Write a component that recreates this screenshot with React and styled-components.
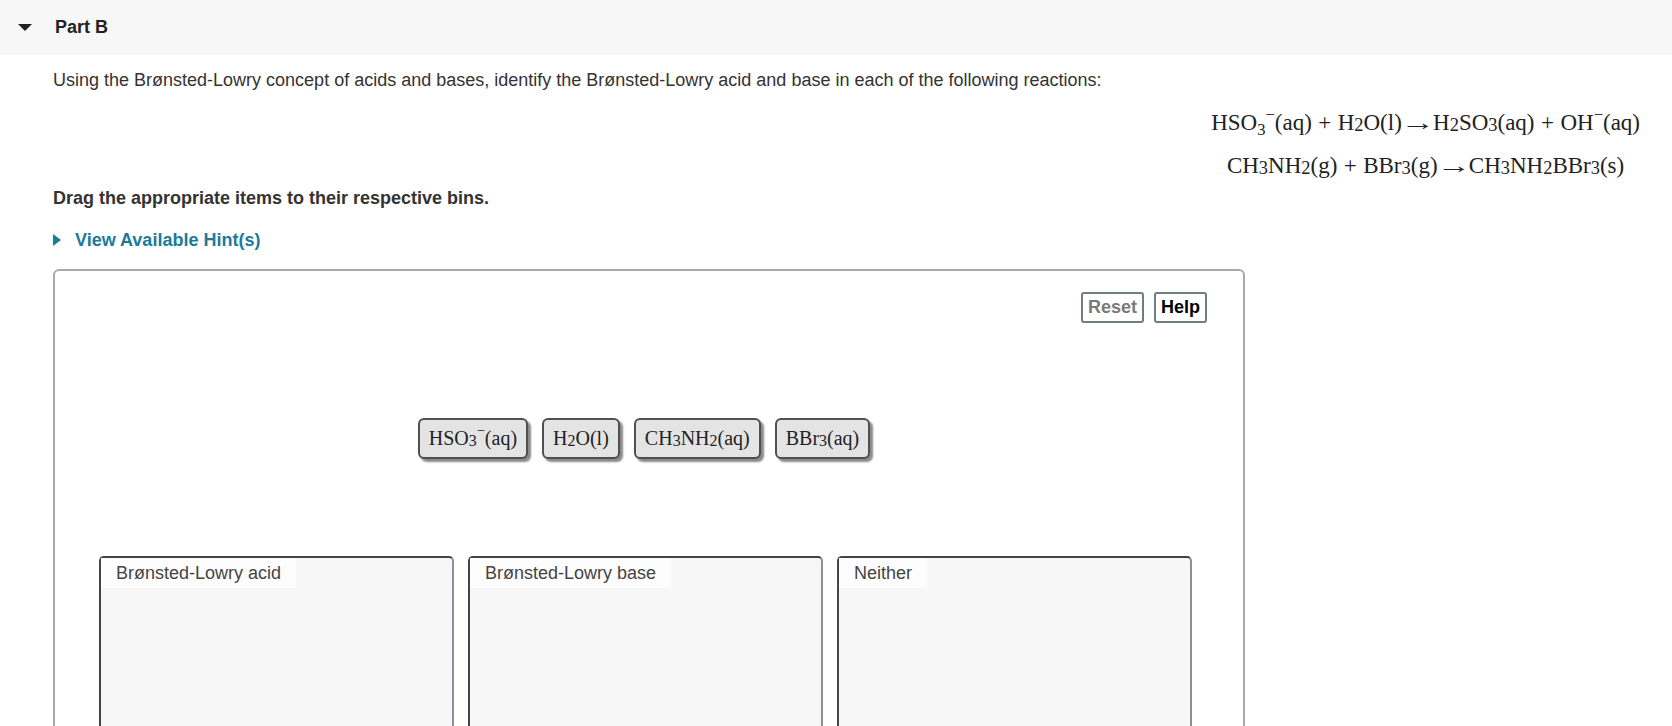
import React from 'react';
import styled, { createGlobalStyle } from 'styled-components';

const GlobalStyle = createGlobalStyle`
  body {
    margin: 0;
    background: #fff;
    font-family: 'Liberation Sans', Arial, sans-serif;
    color: #333;
  }
`;

const Header = styled.div`
  display: flex;
  align-items: center;
  height: 55px;
  padding-left: 18px;
  background: #f7f7f7;
`;

const Caret = styled.span`
  width: 0;
  height: 0;
  margin-right: 23px;
  border-left: 7px solid transparent;
  border-right: 7px solid transparent;
  border-top: 7px solid #222;
`;

const Title = styled.h2`
  margin: 0;
  font-size: 18px;
  font-weight: bold;
  color: #222;
`;

const Content = styled.div`
  padding: 0 32px 40px 53px;
`;

const Intro = styled.p`
  margin: 14px 0 0;
  font-size: 18px;
  line-height: 22px;
`;

const Equations = styled.div`
  display: flex;
  flex-direction: column;
  align-items: center;
  width: fit-content;
  margin: 10px 0 0 auto;
  font-family: 'Liberation Serif', 'Times New Roman', serif;
  font-size: 23px;
  line-height: 43px;
  color: #222;
`;

const Sub = styled.span`
  font-size: ${p => (p.low ? '0.72em' : '0.8em')};
  line-height: 0;
  vertical-align: ${p => (p.low ? '-0.3em' : '-0.08em')};
`;

const Sup = styled.span`
  font-size: 0.72em;
  line-height: 0;
  vertical-align: 0.6em;
`;

const Op = styled.span`
  margin: 0 0.28em;
`;

const Arrow = styled.span`
  display: inline-block;
  transform: scaleX(1.5);
  margin: 0 0.18em;
`;

const Instruction = styled.p`
  margin: 0;
  font-size: 18px;
  font-weight: bold;
  line-height: 22px;
`;

const HintLink = styled.a`
  display: flex;
  align-items: center;
  margin-top: 20px;
  font-size: 18px;
  font-weight: bold;
  line-height: 22px;
  color: #1b7b9b;
  text-decoration: none;
  cursor: pointer;
`;

const HintCaret = styled.span`
  width: 0;
  height: 0;
  margin-right: 14px;
  border-top: 6px solid transparent;
  border-bottom: 6px solid transparent;
  border-left: 8px solid #1b7b9b;
`;

const Workspace = styled.div`
  margin-top: 18px;
  width: 1188px;
  padding-top: 21px;
  border: 2px solid #a9a9a9;
  border-radius: 6px;
`;

const Toolbar = styled.div`
  display: flex;
  justify-content: flex-end;
  gap: 10px;
  padding-right: 36px;
`;

const ToolButton = styled.button`
  height: 31px;
  padding: 0 5px;
  background: #fff;
  border: 2px solid #6f7e86;
  border-radius: 3px;
  font-family: 'Liberation Sans', Arial, sans-serif;
  font-size: 18px;
  font-weight: bold;
  color: ${p => (p.disabled ? '#7a7a7a' : '#000')};
`;

const ItemRow = styled.div`
  display: flex;
  justify-content: center;
  gap: 14px;
  margin-top: 95px;
  padding-right: 10px;
`;

const Item = styled.div`
  display: flex;
  align-items: center;
  height: 41px;
  box-sizing: border-box;
  padding: 0 9px;
  background: #e4e4e4;
  border: 2px solid #505050;
  border-radius: 6px;
  box-shadow: 3px 3px 2px #8a8a8a;
  font-family: 'Liberation Serif', 'Times New Roman', serif;
  font-size: 20px;
  color: #222;
  cursor: grab;
`;

const ItemText = styled.span`
  white-space: nowrap;

  ${Sup} {
    vertical-align: 0.7em;
  }
`;

const BinRow = styled.div`
  display: flex;
  gap: 14px;
  margin-top: 97px;
  padding-left: 44px;
`;

const Bin = styled.div`
  width: 355px;
  height: 240px;
  box-sizing: border-box;
  background: #f7f7f7;
  border: 2px solid;
  border-color: #444 #8d8b9e #8d8b9e #444;
  border-radius: 5px;
`;

const BinLabel = styled.span`
  display: inline-block;
  height: 30px;
  padding: 0 15px;
  background: #fdfdfd;
  font-size: 18px;
  line-height: 30px;
  color: #444;
`;

const items = [
  <>HSO<Sub>3</Sub><Sup>−</Sup>(aq)</>,
  <>H<Sub>2</Sub>O(l)</>,
  <>CH<Sub>3</Sub>NH<Sub>2</Sub>(aq)</>,
  <>BBr<Sub>3</Sub>(aq)</>,
];

const bins = ['Brønsted-Lowry acid', 'Brønsted-Lowry base', 'Neither'];

const App = () => (
  <>
    <GlobalStyle />
    <Header>
      <Caret />
      <Title>Part B</Title>
    </Header>
    <Content>
      <Intro>
        Using the Brønsted-Lowry concept of acids and bases, identify the Brønsted-Lowry acid and base in each of the following reactions:
      </Intro>
      <Equations>
        <div>
          HSO<Sub low>3</Sub><Sup>−</Sup>(aq)<Op>+</Op>H<Sub>2</Sub>O(l)<Arrow>→</Arrow>H<Sub>2</Sub>SO<Sub>3</Sub>(aq)<Op>+</Op>OH<Sup>−</Sup>(aq)
        </div>
        <div>
          CH<Sub>3</Sub>NH<Sub>2</Sub>(g)<Op>+</Op>BBr<Sub>3</Sub>(g)<Arrow>→</Arrow>CH<Sub>3</Sub>NH<Sub>2</Sub>BBr<Sub>3</Sub>(s)
        </div>
      </Equations>
      <Instruction>Drag the appropriate items to their respective bins.</Instruction>
      <HintLink>
        <HintCaret />
        View Available Hint(s)
      </HintLink>
      <Workspace>
        <Toolbar>
          <ToolButton disabled>Reset</ToolButton>
          <ToolButton>Help</ToolButton>
        </Toolbar>
        <ItemRow>
          {items.map((content, i) => (
            <Item key={i}>
              <ItemText>{content}</ItemText>
            </Item>
          ))}
        </ItemRow>
        <BinRow>
          {bins.map(name => (
            <Bin key={name}>
              <BinLabel>{name}</BinLabel>
            </Bin>
          ))}
        </BinRow>
      </Workspace>
    </Content>
  </>
);

export default App;
